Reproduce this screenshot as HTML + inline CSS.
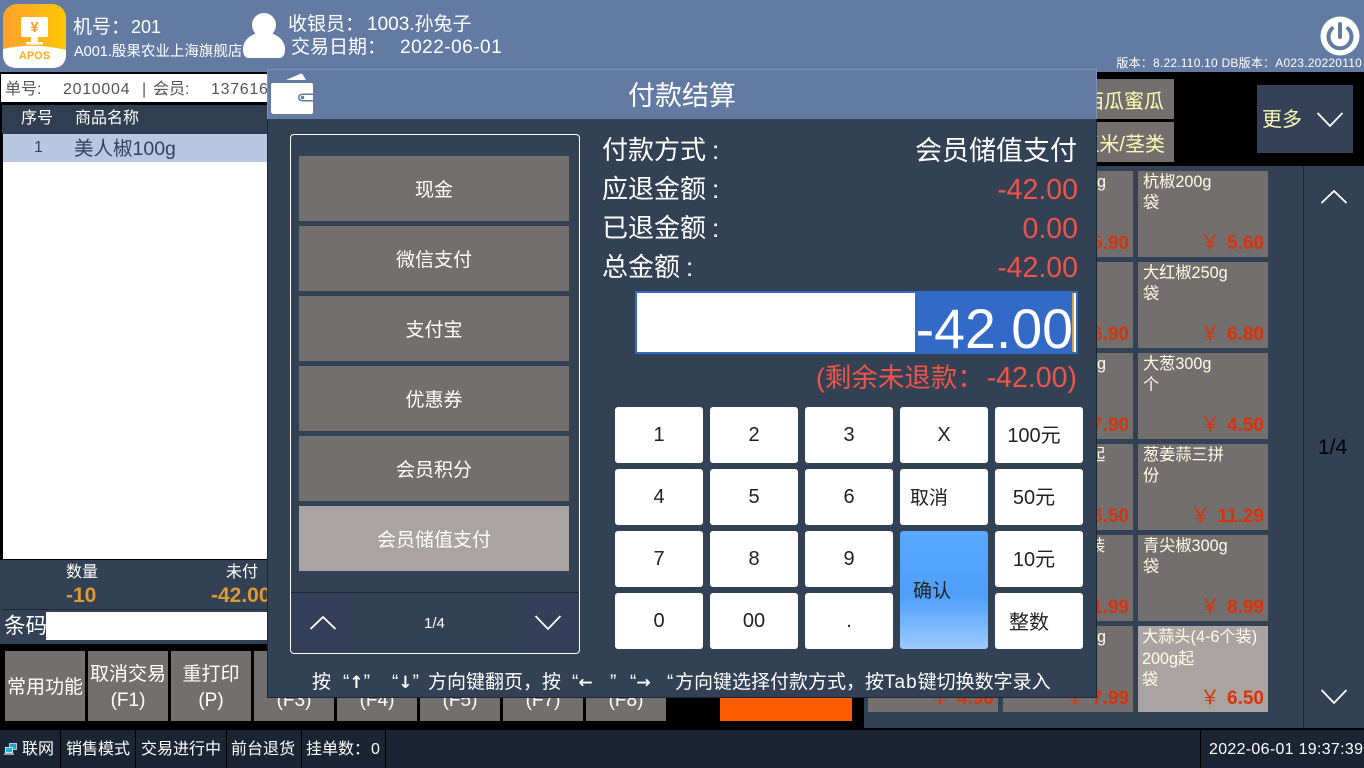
<!DOCTYPE html>
<html lang="zh"><head><meta charset="utf-8"><title>付款结算</title>
<style>
*{box-sizing:border-box}
html,body{margin:0;padding:0;width:1364px;height:768px;overflow:hidden;background:#000}
body{position:relative;font-family:"Liberation Sans","Noto Sans CJK SC",sans-serif;color:#fff}
.b,.t{position:absolute}
.t{white-space:nowrap;line-height:1}
.g{background:#746f6f}
.c{display:flex;align-items:center;justify-content:center;text-align:center}
.item{position:absolute;width:130px;height:86px;background:#746f6f;color:#fffde8;font-size:16.200px}
.item .n{position:absolute;left:5px;top:1px;line-height:21px;white-space:pre}
.item .p{position:absolute;right:4px;bottom:3px;color:#d8340c;font-size:19px;font-weight:bold;line-height:20px;white-space:nowrap}
.item .p i{font-style:normal;font-weight:normal;margin-right:7px;font-size:20px}
.pay{position:absolute;left:299px;width:270px;height:65px;background:#746f6f;font-size:19px}
.key{position:absolute;width:88px;height:56px;background:#fff;border-radius:3px;color:#222;font-size:20px}
.fb{position:absolute;top:651px;width:80px;height:70px;background:#746f6f;font-size:19px;line-height:26px;padding-top:3px}
.st{position:absolute;top:731px;height:37px;font-size:16px;line-height:37px;white-space:nowrap}
.sp{position:absolute;top:730px;width:1px;height:38px;background:#000}
.lab{position:absolute;left:602px;font-size:26px;line-height:1;white-space:nowrap}
.lab b{font-weight:normal;margin-left:6px}
.val{position:absolute;right:286px;font-size:28.500px;line-height:1;white-space:nowrap;color:#ee5549}
.h{position:absolute;top:673px;font-size:19px;line-height:1;white-space:nowrap}
.h u{text-decoration:none;font-family:"DejaVu Sans",sans-serif;font-weight:bold;font-size:17px}
</style></head><body>

<!-- header -->
<div class="b" style="left:0;top:0;width:1364px;height:72px;background:#637ba3"></div>
<svg class="b" style="left:3px;top:4px" width="63" height="64" viewBox="0 0 63 64">
<defs><linearGradient id="lg" x1="0" x2="1" y1="0" y2="0"><stop offset="0" stop-color="#ffa12c"/><stop offset="1" stop-color="#ffc707"/></linearGradient></defs>
<rect width="63" height="64" rx="14" fill="url(#lg)"/>
<path d="M0 45Q31 38 63 46V50Q63 64 49 64H14Q0 64 0 50Z" fill="#fff"/>
<rect x="18" y="13" width="27" height="20" rx="2" fill="#fff"/>
<path d="M28 33h7v5h-7zM23 38h17v2.500H23z" fill="#fff"/>
<text x="31.500" y="28" text-anchor="middle" font-size="15" font-weight="bold" fill="#ff9d22" font-family="Liberation Sans">¥</text>
<text x="31.500" y="55" text-anchor="middle" font-size="11" font-weight="bold" fill="#ffab1c" font-family="Liberation Sans">APOS</text>
</svg>
<div class="t" style="left:73px;top:18px;font-size:19px">机号：</div>
<div class="t" style="left:131px;top:18px;font-size:18px">201</div>
<div class="t" style="left:74px;top:45px;font-size:14.500px">A001.殷果农业上海旗舰店</div>
<svg class="b" style="left:243px;top:13px" width="43" height="46" viewBox="0 0 43 46">
<circle cx="21" cy="12" r="12" fill="#fff"/>
<path d="M0 36C0 27 8 22 14 20Q21 27 28 20C34 22 42 27 42 36Q42 45 36 45H6Q0 45 0 36Z" fill="#fff"/>
</svg>
<div class="t" style="left:288px;top:15px;font-size:19px">收银员：</div>
<div class="t" style="left:367px;top:15px;font-size:19px">1003.孙兔子</div>
<div class="t" style="left:291px;top:38px;font-size:19px">交易日期：</div>
<div class="t" style="left:400px;top:38px;font-size:19px;letter-spacing:.5px">2022-06-01</div>
<svg class="b" style="left:1320px;top:16px" width="40" height="40" viewBox="0 0 40 40">
<circle cx="20" cy="20" r="19.500" fill="#fff"/>
<path d="M20 8V21" stroke="#637ba3" stroke-width="4" stroke-linecap="round" fill="none"/>
<path d="M12 12.500A11.500 11.500 0 1 0 28 12.500" stroke="#637ba3" stroke-width="4" fill="none" stroke-linecap="round"/>
</svg>
<div class="t" style="right:2px;top:57px;font-size:12px;letter-spacing:.22px">版本：8.22.110.10 DB版本：A023.20220110</div>

<!-- left panel -->
<div class="b" style="left:1px;top:74px;width:270px;height:28px;background:#fff"></div>
<div class="t" style="left:5px;top:82px;font-size:16px;color:#555">单号:</div>
<div class="t" style="left:63px;top:82px;font-size:16px;letter-spacing:.7px;color:#555">2010004</div>
<div class="t" style="left:142px;top:82px;font-size:16px;color:#555">|</div>
<div class="t" style="left:153px;top:82px;font-size:16px;color:#555">会员:</div>
<div class="t" style="left:211px;top:82px;font-size:16px;letter-spacing:.7px;color:#555">137616</div>
<div class="b" style="left:2px;top:105px;width:270px;height:29px;background:#2f3e50"></div>
<div class="t" style="left:21px;top:111px;font-size:16px">序号</div>
<div class="t" style="left:75px;top:111px;font-size:16px">商品名称</div>
<div class="b" style="left:3px;top:134px;width:270px;height:28px;background:#b8c7e2"></div>
<div class="b" style="left:3px;top:162px;width:270px;height:397px;background:#fff"></div>
<div class="t" style="left:34px;top:140px;font-size:16px;color:#33425c">1</div>
<div class="t" style="left:74px;top:140px;font-size:19.500px;color:#33425c">美人椒100g</div>
<div class="b" style="left:0;top:560px;width:270px;height:84px;background:#324154"></div>
<div class="t" style="left:66px;top:565px;font-size:16px">数量</div>
<div class="t" style="left:66px;top:585px;font-size:21px;font-weight:bold;color:#e09a34">-10</div>
<div class="t" style="left:226px;top:565px;font-size:16px">未付</div>
<div class="t" style="left:211px;top:585px;font-size:21px;font-weight:bold;color:#e09a34">-42.00</div>
<div class="b" style="left:2px;top:609px;width:268px;height:1px;background:#1d2733"></div>
<div class="t" style="left:4px;top:616px;font-size:21.500px">条码</div>
<div class="b" style="left:46px;top:612px;width:224px;height:28px;background:#fff"></div>

<!-- function buttons -->
<div class="fb c" style="left:5px">常用功能</div>
<div class="fb c" style="left:88px">取消交易<br>(F1)</div>
<div class="fb c" style="left:171px">重打印<br>(P)</div>
<div class="fb c" style="left:254px">修改<br>(F3)</div>
<div class="fb c" style="left:337px">挂单<br>(F4)</div>
<div class="fb c" style="left:420px">会员<br>(F5)</div>
<div class="fb c" style="left:503px">折扣<br>(F7)</div>
<div class="fb c" style="left:586px">退货<br>(F8)</div>
<div class="b c" style="left:720px;top:651px;width:132px;height:70px;background:#ff5b00;font-size:18px;font-weight:bold;padding-bottom:14px">¥-42.00</div>

<!-- right panel -->
<div class="b" style="left:864px;top:166px;width:500px;height:562px;background:#324154"></div>
<div class="b" style="left:1303px;top:166px;width:1px;height:562px;background:#1f2a38"></div>
<div class="b g c" style="left:1000px;top:79px;width:174px;height:40px;font-size:20px;color:#fdfdb4;justify-content:flex-end;padding-right:10px">西瓜蜜瓜</div>
<div class="b g c" style="left:1000px;top:122px;width:174px;height:40px;font-size:20px;color:#fdfdb4;justify-content:flex-end;padding-right:9px">玉米/茎类</div>
<div class="b" style="left:1257px;top:85px;width:96px;height:68px;background:#344156"></div>
<div class="t" style="left:1262px;top:110px;font-size:20px;color:#fdfdb4">更多</div>
<svg class="b" style="left:1317px;top:111px" width="26" height="18" viewBox="0 0 26 18"><path d="M.5 2L13 15 25.500 2" stroke="#fff" stroke-width="1.800" fill="none"/></svg>
<svg class="b" style="left:1321px;top:188px" width="26" height="18" viewBox="0 0 26 18"><path d="M.5 15L13 3 25.500 15" stroke="#fff" stroke-width="1.800" fill="none"/></svg>
<svg class="b" style="left:1321px;top:688px" width="26" height="18" viewBox="0 0 26 18"><path d="M.5 2L13 15 25.500 2" stroke="#fff" stroke-width="1.800" fill="none"/></svg>
<div class="t" style="left:1318px;top:437px;font-size:21px;color:#000">1/4</div>

<div class="item" style="left:868px;top:626px"><div class="p"><i>￥</i>4.90</div></div>
<div class="item" style="left:1003px;top:171px"><div class="n" style="left:94px">g</div><div class="p"><i>￥</i>5.90</div></div>
<div class="item" style="left:1003px;top:262px"><div class="p"><i>￥</i>6.90</div></div>
<div class="item" style="left:1003px;top:353px"><div class="n" style="left:94px">g</div><div class="p"><i>￥</i>7.90</div></div>
<div class="item" style="left:1003px;top:444px"><div class="n" style="left:86px">起</div><div class="p"><i>￥</i>6.50</div></div>
<div class="item" style="left:1003px;top:535px"><div class="n" style="left:86px">装</div><div class="p"><i>￥</i>1.99</div></div>
<div class="item" style="left:1003px;top:626px"><div class="n" style="left:94px">g</div><div class="p"><i>￥</i>7.99</div></div>
<div class="item" style="left:1138px;top:171px"><div class="n">杭椒200g
袋</div><div class="p"><i>￥</i>5.60</div></div>
<div class="item" style="left:1138px;top:262px"><div class="n">大红椒250g
袋</div><div class="p"><i>￥</i>6.80</div></div>
<div class="item" style="left:1138px;top:353px"><div class="n">大葱300g
个</div><div class="p"><i>￥</i>4.50</div></div>
<div class="item" style="left:1138px;top:444px"><div class="n">葱姜蒜三拼
份</div><div class="p"><i>￥</i>11.29</div></div>
<div class="item" style="left:1138px;top:535px"><div class="n">青尖椒300g
袋</div><div class="p"><i>￥</i>8.99</div></div>
<div class="item" style="left:1138px;top:626px;background:#a9a3a1"><div class="n" style="left:4px;top:1px;line-height:21.500px">大蒜头(4-6个装)
200g起
袋</div><div class="p"><i>￥</i>6.50</div></div>

<!-- status bar -->
<div class="b" style="left:0;top:730px;width:1364px;height:38px;background:#1a2433"></div>
<svg class="b" style="left:4px;top:742px" width="14" height="14" viewBox="0 0 14 14"><rect x="5" y="1" width="8" height="7" fill="#bfc7d0"/><rect x="6" y="2" width="6" height="5" fill="#17a7c8"/><rect x="1" y="5" width="8" height="6" fill="#d9dde2"/><rect x="2" y="6" width="6" height="4" fill="#15b9d4"/><rect x="0" y="11" width="10" height="2" fill="#9aa3ad"/></svg>
<div class="st" style="left:22px">联网</div>
<div class="sp" style="left:60px"></div>
<div class="st" style="left:66px">销售模式</div>
<div class="sp" style="left:135px"></div>
<div class="st" style="left:141px">交易进行中</div>
<div class="sp" style="left:226px"></div>
<div class="st" style="left:231px">前台退货</div>
<div class="sp" style="left:301px"></div>
<div class="st" style="left:306px">挂单数：</div>
<div class="st" style="left:371px">0</div>
<div class="sp" style="left:385px"></div>
<div class="sp" style="left:1200px"></div>
<div class="t" style="left:1209px;top:742px;font-size:16px;letter-spacing:.3px">2022-06-01 19:37:39</div>

<!-- dialog -->
<div class="b" style="left:267px;top:69px;width:830px;height:629px;background:#324154;border:1px solid #1d2733;border-top:0"></div>
<div class="b" style="left:267px;top:69px;width:830px;height:50px;background:#637ba3;border:1px solid #7e93b8;border-bottom:0"></div>
<svg class="b" style="left:270px;top:73px" width="44" height="42" viewBox="0 0 44 42">
<path d="M16 7L30 1Q32 0 33 2L36 7Z" fill="#fff"/>
<path d="M3 10H41Q43 10 43 12V20.500H33Q28 20.500 28 24.500T33 28.500H43V39Q43 41 41 41H4Q1 41 1 38V12Q1 10 3 10Z" fill="#fff"/>
<path d="M33 22H43V27H33Q29.500 27 29.500 24.500T33 22Z" fill="#fff"/>
<circle cx="32.500" cy="24.500" r="1.800" fill="#637ba3"/>
</svg>
<div class="t" style="left:628px;top:83px;font-size:27px">付款结算</div>

<div class="b" style="left:290px;top:134px;width:290px;height:520px;border:1px solid #fff;border-radius:4px"></div>
<div class="pay c" style="top:156px">现金</div>
<div class="pay c" style="top:226px">微信支付</div>
<div class="pay c" style="top:296px">支付宝</div>
<div class="pay c" style="top:366px">优惠券</div>
<div class="pay c" style="top:436px">会员积分</div>
<div class="pay c" style="top:506px;background:#a9a3a1">会员储值支付</div>
<div class="b" style="left:291px;top:592px;width:288px;height:1px;background:#1d2733"></div>
<div class="b" style="left:292px;top:594px;width:60px;height:58px;background:#343f5a"></div>
<div class="b" style="left:518px;top:594px;width:60px;height:58px;background:#343f5a"></div>
<svg class="b" style="left:310px;top:614px" width="26" height="18" viewBox="0 0 26 18"><path d="M.5 15L13 3 25.500 15" stroke="#fff" stroke-width="1.800" fill="none"/></svg>
<svg class="b" style="left:535px;top:614px" width="26" height="18" viewBox="0 0 26 18"><path d="M.5 2L13 15 25.500 2" stroke="#fff" stroke-width="1.800" fill="none"/></svg>
<div class="t" style="left:424px;top:616px;font-size:15px">1/4</div>

<div class="lab" style="top:137px">付款方式<b>:</b></div>
<div class="lab" style="top:176px">应退金额<b>:</b></div>
<div class="lab" style="top:215px">已退金额<b>:</b></div>
<div class="lab" style="top:254px">总金额<b>:</b></div>
<div class="val" style="top:138px;color:#fff;font-size:27px;right:287px">会员储值支付</div>
<div class="val" style="top:176px">-42.00</div>
<div class="val" style="top:215px">0.00</div>
<div class="val" style="top:254px">-42.00</div>

<div class="b" style="left:635px;top:291px;width:443px;height:63px;background:#fff;border:2px solid #3369c7"></div>
<div class="b" style="left:915px;top:293px;width:159px;height:59px;background:#3369c7"></div>
<div class="b" style="left:1072px;top:293px;width:2px;height:59px;background:#d9a24a"></div>
<div class="t" style="right:291px;top:298px;font-size:55.500px;line-height:62px">-42.00</div>
<div class="t" style="left:816px;top:365px;font-size:26.500px;color:#ee5549">(剩余未退款：</div>
<div class="t" style="right:287px;top:364px;font-size:28.500px;color:#ee5549">-42.00)</div>

<div class="key c" style="left:615px;top:407px">1</div>
<div class="key c" style="left:710px;top:407px">2</div>
<div class="key c" style="left:805px;top:407px">3</div>
<div class="key c" style="left:900px;top:407px">X</div>
<div class="key c" style="left:995px;top:407px;padding:0 10px 4px 0">100元</div>
<div class="key c" style="left:615px;top:469px">4</div>
<div class="key c" style="left:710px;top:469px">5</div>
<div class="key c" style="left:805px;top:469px">6</div>
<div class="key c" style="left:900px;top:469px;justify-content:flex-start;padding:0 0 2px 10px;font-size:19px">取消</div>
<div class="key c" style="left:995px;top:469px;padding:0 10px 4px 0">50元</div>
<div class="key c" style="left:615px;top:531px">7</div>
<div class="key c" style="left:710px;top:531px">8</div>
<div class="key c" style="left:805px;top:531px">9</div>
<div class="key c" style="left:900px;top:531px;height:118px;background:linear-gradient(180deg,#59a8ff 0%,#4f9ffa 55%,#9ccbff 100%);justify-content:flex-start;padding-left:13px;padding-bottom:2px;font-size:19px">确认</div>
<div class="key c" style="left:995px;top:531px;padding:0 10px 4px 0">10元</div>
<div class="key c" style="left:615px;top:593px">0</div>
<div class="key c" style="left:710px;top:593px">00</div>
<div class="key c" style="left:805px;top:593px">.</div>
<div class="key c" style="left:995px;top:593px;justify-content:flex-start;padding:0 0 2px 14px">整数</div>

<div class="h" style="left:312px">按</div>
<div class="h" style="left:343px">“<u>↑</u>”</div>
<div class="h" style="left:392px">“<u>↓</u>”</div>
<div class="h" style="left:428px">方向键翻页，</div>
<div class="h" style="left:542px">按</div>
<div class="h" style="left:572px">“<u>←</u></div>
<div class="h" style="left:610px">”</div>
<div class="h" style="left:630px">“<u>→</u></div>
<div class="h" style="left:667px">“</div>
<div class="h" style="left:675px">方向键选择付款方式，按<span style="letter-spacing:1px">Tab</span>键切换数字录入</div>
</body></html>
